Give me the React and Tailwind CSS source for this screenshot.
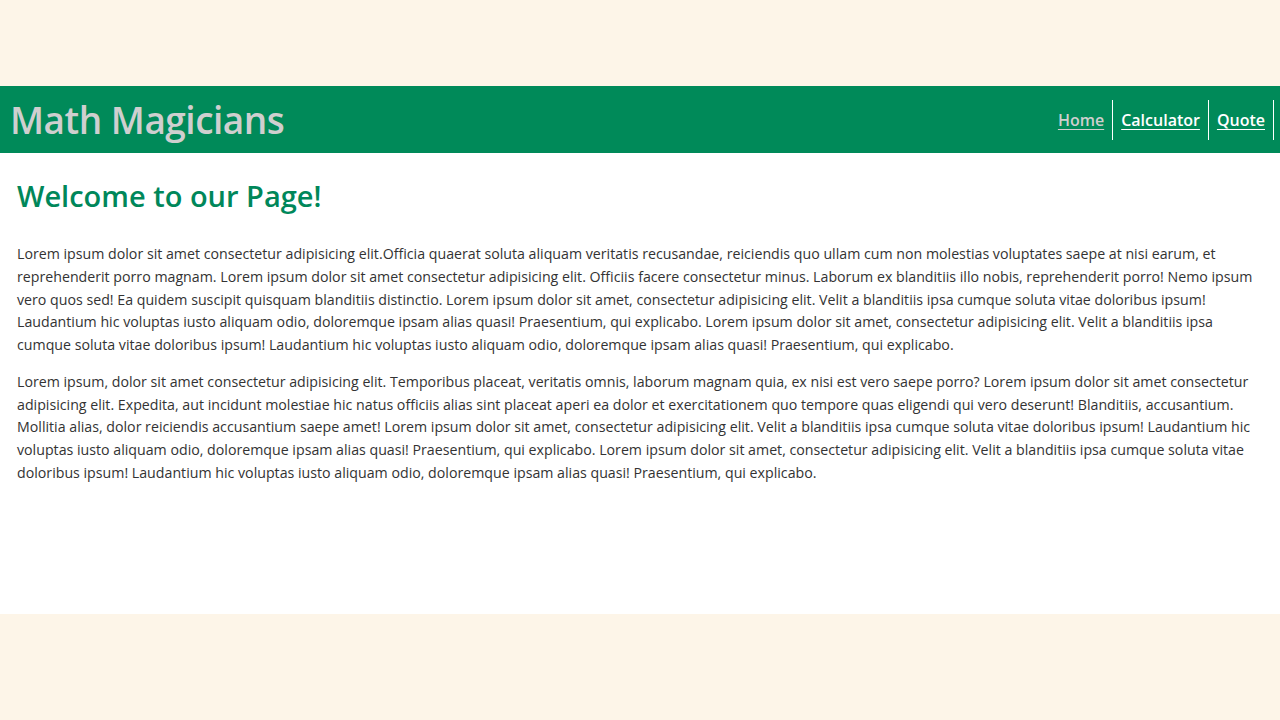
import React from "react";

const links = [
  { label: "Home", active: true },
  { label: "Calculator" },
  { label: "Quote" },
];

const paraOne =
  "Lorem ipsum dolor sit amet consectetur adipisicing elit.Officia quaerat soluta aliquam veritatis recusandae, reiciendis quo ullam cum non molestias voluptates saepe at nisi earum, et reprehenderit porro magnam. Lorem ipsum dolor sit amet consectetur adipisicing elit. Officiis facere consectetur minus. Laborum ex blanditiis illo nobis, reprehenderit porro! Nemo ipsum vero quos sed! Ea quidem suscipit quisquam blanditiis distinctio. Lorem ipsum dolor sit amet, consectetur adipisicing elit. Velit a blanditiis ipsa cumque soluta vitae doloribus ipsum! Laudantium hic voluptas iusto aliquam odio, doloremque ipsam alias quasi! Praesentium, qui explicabo. Lorem ipsum dolor sit amet, consectetur adipisicing elit. Velit a blanditiis ipsa cumque soluta vitae doloribus ipsum! Laudantium hic voluptas iusto aliquam odio, doloremque ipsam alias quasi! Praesentium, qui explicabo.";

const paraTwo =
  "Lorem ipsum, dolor sit amet consectetur adipisicing elit. Temporibus placeat, veritatis omnis, laborum magnam quia, ex nisi est vero saepe porro? Lorem ipsum dolor sit amet consectetur adipisicing elit. Expedita, aut incidunt molestiae hic natus officiis alias sint placeat aperi ea dolor et exercitationem quo tempore quas eligendi qui vero deserunt! Blanditiis, accusantium. Mollitia alias, dolor reiciendis accusantium saepe amet! Lorem ipsum dolor sit amet, consectetur adipisicing elit. Velit a blanditiis ipsa cumque soluta vitae doloribus ipsum! Laudantium hic voluptas iusto aliquam odio, doloremque ipsam alias quasi! Praesentium, qui explicabo. Lorem ipsum dolor sit amet, consectetur adipisicing elit. Velit a blanditiis ipsa cumque soluta vitae doloribus ipsum! Laudantium hic voluptas iusto aliquam odio, doloremque ipsam alias quasi! Praesentium, qui explicabo.";

const NavBar = () => (
  <header className="flex h-[67px] items-center justify-between bg-[#008a59] pl-[10px] pr-[6px]">
    <h1 className="text-[37px] font-semibold leading-none tracking-[-0.5px] text-[#cfcfcf]">
      Math Magicians
    </h1>
    <nav className="flex">
      {links.map((link) => (
        <a
          key={link.label}
          href="#"
          className={
            "flex h-[40px] items-center border-r border-white px-[8px] text-[16px] font-semibold underline underline-offset-[3px] " +
            (link.active ? "text-[#cfcfcf]" : "text-white")
          }
        >
          {link.label}
        </a>
      ))}
    </nav>
  </header>
);

const App = () => {
  return (
    <div className="min-h-[720px] bg-[#fdf5e8] pt-[86px] font-['Open_Sans',sans-serif]">
      <NavBar />
      <main className="h-[461px] bg-white px-[17px] pt-[23px]">
        <h2 className="text-[29px] font-semibold leading-[40px] text-[#00875a]">
          Welcome to our Page!
        </h2>
        <p className="mt-[27px] text-[14.2px] leading-[22.75px] text-[#333]">
          {paraOne}
        </p>
        <p className="mt-[14px] text-[14.2px] leading-[22.75px] text-[#333]">
          {paraTwo}
        </p>
      </main>
    </div>
  );
};

export default App;
